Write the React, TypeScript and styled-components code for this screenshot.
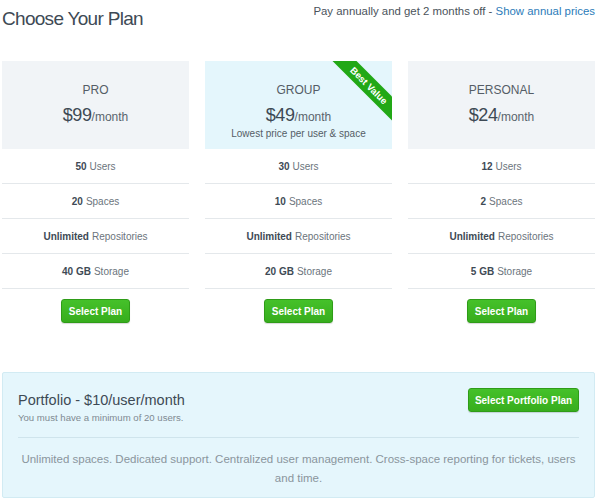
import React from "react";
import styled, { createGlobalStyle } from "styled-components";

const GlobalStyle = createGlobalStyle`
  * { box-sizing: border-box; }
  body {
    margin: 0;
    background: #ffffff;
    font-family: "Liberation Sans", Arial, Helvetica, sans-serif;
    color: #3e4a55;
  }
`;

type Plan = {
  name: string;
  price: string;
  note?: string;
  featured?: boolean;
  features: [string, string][];
};

const plans: Plan[] = [
  {
    name: "PRO",
    price: "$99",
    features: [
      ["50", "Users"],
      ["20", "Spaces"],
      ["Unlimited", "Repositories"],
      ["40 GB", "Storage"],
    ],
  },
  {
    name: "GROUP",
    price: "$49",
    note: "Lowest price per user & space",
    featured: true,
    features: [
      ["30", "Users"],
      ["10", "Spaces"],
      ["Unlimited", "Repositories"],
      ["20 GB", "Storage"],
    ],
  },
  {
    name: "PERSONAL",
    price: "$24",
    features: [
      ["12", "Users"],
      ["2", "Spaces"],
      ["Unlimited", "Repositories"],
      ["5 GB", "Storage"],
    ],
  },
];

const App = () => {
  return (
    <>
      <GlobalStyle />
      <Page>
        <TopBar>
          <Title>Choose Your Plan</Title>
          <Annual>
            Pay annually and get 2 months off - <Link href="#">Show annual prices</Link>
          </Annual>
        </TopBar>

        <PlanGrid>
          {plans.map((plan) => (
            <PlanColumn key={plan.name}>
              <PlanHeader $featured={plan.featured}>
                {plan.featured && <Ribbon>Best Value</Ribbon>}
                <PlanName>{plan.name}</PlanName>
                <Price>
                  {plan.price}
                  <Per>/month</Per>
                </Price>
                {plan.note && <PlanNote>{plan.note}</PlanNote>}
              </PlanHeader>
              <FeatureList>
                {plan.features.map(([strong, rest]) => (
                  <Feature key={rest}>
                    <b>{strong}</b> {rest}
                  </Feature>
                ))}
              </FeatureList>
              <SelectButton>Select Plan</SelectButton>
            </PlanColumn>
          ))}
        </PlanGrid>

        <Portfolio>
          <PortfolioHead>
            <div>
              <PortfolioTitle>Portfolio - $10/user/month</PortfolioTitle>
              <PortfolioSub>You must have a minimum of 20 users.</PortfolioSub>
            </div>
            <SelectButton $wide>Select Portfolio Plan</SelectButton>
          </PortfolioHead>
          <PortfolioText>
            Unlimited spaces. Dedicated support. Centralized user management. Cross-space
            reporting for tickets, users and time.
          </PortfolioText>
        </Portfolio>
      </Page>
    </>
  );
};

export default App;

const Page = styled.div`
  width: 600px;
  padding: 0 5px 0 2px;
`;

const TopBar = styled.div`
  display: flex;
  justify-content: space-between;
  align-items: flex-start;
  height: 61px;
`;

const Title = styled.h1`
  margin: 8px 0 0;
  font-size: 19px;
  line-height: 22px;
  font-weight: normal;
  letter-spacing: -0.7px;
  color: #3e4a55;
`;

const Annual = styled.div`
  margin-top: 3px;
  font-size: 11.4px;
  line-height: 16px;
  color: #4a535b;
`;

const Link = styled.a`
  color: #2b7bb9;
  text-decoration: none;
`;

const PlanGrid = styled.div`
  display: grid;
  grid-template-columns: repeat(3, 187px);
  justify-content: space-between;
`;

const PlanColumn = styled.div`
  display: flex;
  flex-direction: column;
  align-items: center;
`;

const PlanHeader = styled.div<{ $featured?: boolean }>`
  position: relative;
  overflow: hidden;
  width: 100%;
  height: 88px;
  padding-top: 21px;
  display: flex;
  flex-direction: column;
  align-items: center;
  background: ${({ $featured }) => ($featured ? "#e4f6fc" : "#f1f4f7")};
`;

const Ribbon = styled.div`
  position: absolute;
  top: 16px;
  left: 114px;
  width: 100px;
  height: 17px;
  transform: rotate(45deg);
  background: #22a816;
  color: #ffffff;
  font-size: 9.5px;
  font-weight: bold;
  line-height: 17px;
  text-align: center;
`;

const PlanName = styled.div`
  font-size: 12px;
  line-height: 16px;
  color: #555d66;
`;

const Price = styled.div`
  margin-top: 6px;
  font-size: 18px;
  line-height: 22px;
  color: #3e4a55;
  letter-spacing: -0.4px;
`;

const Per = styled.span`
  font-size: 12px;
  letter-spacing: 0;
  color: #5a646d;
`;

const PlanNote = styled.div`
  margin-top: -1px;
  font-size: 10px;
  line-height: 14px;
  color: #555d66;
`;

const FeatureList = styled.ul`
  list-style: none;
  margin: 0;
  padding: 0;
  width: 100%;
`;

const Feature = styled.li`
  height: 35px;
  display: flex;
  align-items: center;
  justify-content: center;
  gap: 3px;
  border-bottom: 1px solid #e4e8eb;
  font-size: 10px;
  color: #6b747c;

  b {
    color: #3e4a55;
  }
`;

const SelectButton = styled.button<{ $wide?: boolean }>`
  margin-top: ${({ $wide }) => ($wide ? "0" : "10px")};
  width: ${({ $wide }) => ($wide ? "111px" : "69px")};
  height: 24px;
  padding: 0;
  border: 1px solid #2f9c18;
  border-radius: 3px;
  background: linear-gradient(#45c12a, #37ad1d);
  color: #ffffff;
  font-family: inherit;
  font-size: 10px;
  font-weight: bold;
  box-shadow: 0 1px 1px rgba(0, 0, 0, 0.15);
`;

const Portfolio = styled.div`
  margin-top: 49px;
  padding: 15px 15px 0;
  height: 126px;
  background: #e5f6fc;
  border: 1px solid #d2ebf3;
  border-radius: 2px;
`;

const PortfolioHead = styled.div`
  display: flex;
  justify-content: space-between;
  align-items: flex-start;
  padding-bottom: 12px;
  border-bottom: 1px solid #cfe4ec;
`;

const PortfolioTitle = styled.div`
  margin-top: 3px;
  font-size: 14.5px;
  line-height: 18px;
  color: #3e4a55;
`;

const PortfolioSub = styled.div`
  margin-top: 2px;
  font-size: 9.6px;
  line-height: 14px;
  color: #7f8a92;
`;

const PortfolioText = styled.p`
  margin: 12px 0 0;
  text-align: center;
  font-size: 11.5px;
  line-height: 19px;
  color: #8a959c;
`;
